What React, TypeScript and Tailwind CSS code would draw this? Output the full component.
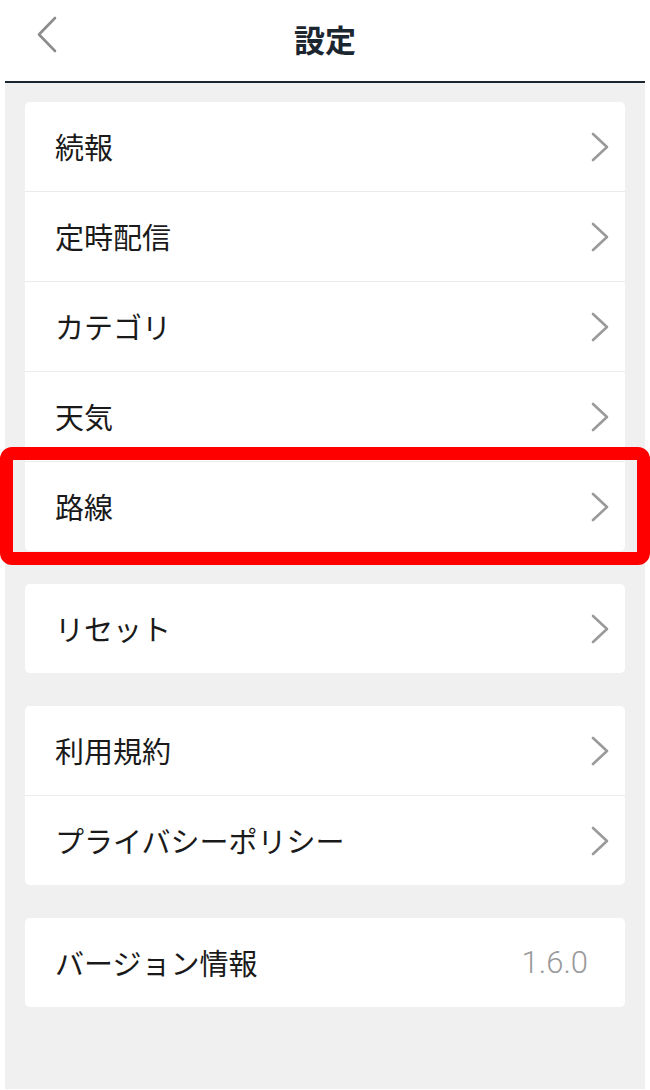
import React from 'react';

const jp = { fontFamily: '"Noto Sans CJK JP", "Noto Sans", sans-serif' };

const Chevron: React.FC = () => (
    <svg width="18" height="30" viewBox="0 0 18 30" fill="none" className="flex-shrink-0">
        <path d="M2 2 L16 15 L2 28" stroke="#9a9a9a" strokeWidth={2.6} strokeLinecap="round" strokeLinejoin="round" />
    </svg>
);

type Row = { label: string; value?: string };

const Card: React.FC<{ rows: Row[] }> = ({ rows }) => (
    <div className="bg-white rounded-[5px] flex flex-col">
        {rows.map((r, i) => (
            <div
                key={r.label}
                className={`flex items-center justify-between pl-[30px] ${r.value ? 'pr-[37px]' : 'pr-[16px]'} ${i > 0 ? 'h-[90px] border-t border-[#ebebeb]' : 'h-[89px]'}`}
            >
                <span className="text-[29px] text-[#1a1a1a] leading-none" style={jp}>{r.label}</span>
                {r.value ? (
                    <span className="text-[31px] font-light text-[#9a9a9a] leading-none" style={{ fontFamily: 'Roboto, sans-serif' }}>{r.value}</span>
                ) : (
                    <Chevron />
                )}
            </div>
        ))}
    </div>
);

export default function App() {
    return (
        <div className="relative w-[650px] h-[1090px] bg-white px-[5px]">
            <header className="relative h-[83px] flex items-center justify-center border-b-2 border-[#1c2630]">
                <button className="absolute left-[27px] top-[16px]" aria-label="戻る">
                    <svg width="26" height="38" viewBox="0 0 26 38" fill="none">
                        <path d="M23 2 L7 18.5 L23 35" stroke="#8c8c8c" strokeWidth={2.6} strokeLinecap="round" strokeLinejoin="round" />
                    </svg>
                </button>
                <h1 className="text-[31px] font-bold text-[#1c2630] leading-none -mt-[4px]" style={jp}>設定</h1>
            </header>

            <main className="bg-[#f0f0f0] h-[1006px] pt-[19px] px-[20px] flex flex-col gap-[33px]">
                <Card rows={[{ label: '続報' }, { label: '定時配信' }, { label: 'カテゴリ' }, { label: '天気' }, { label: '路線' }]} />
                <Card rows={[{ label: 'リセット' }]} />
                <Card rows={[{ label: '利用規約' }, { label: 'プライバシーポリシー' }]} />
                <Card rows={[{ label: 'バージョン情報', value: '1.6.0' }]} />
            </main>

            {/* highlight frame */}
            <div className="absolute left-0 top-[447px] w-[650px] h-[118px] border-[13px] border-[#ff0000] rounded-[12px] pointer-events-none" />
        </div>
    );
}
